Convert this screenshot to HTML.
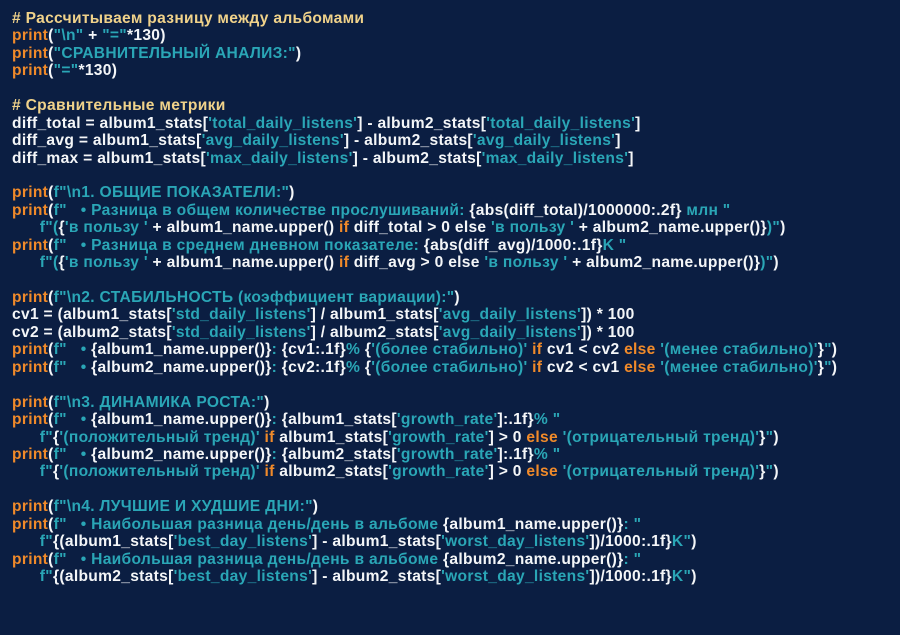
<!DOCTYPE html>
<html><head><meta charset="utf-8"><style>
html,body{margin:0;padding:0;}
body{width:900px;height:635px;background:#0b1e42;overflow:hidden;}
pre{margin:0;position:absolute;left:12px;top:10px;font-family:"Liberation Sans","DejaVu Sans",sans-serif;font-weight:bold;font-size:15.6px;letter-spacing:0.3px;line-height:17.44px;color:#f4f6f8;white-space:pre;}
.k{color:#f08a2a}.s{color:#2aa6b6}.c{color:#f0d28a}
</style></head><body>
<pre><span class="c"># Рассчитываем разницу между альбомами</span>
<span class="k">print</span>(<span class="s">"\n"</span> + <span class="s">"="</span>*130)
<span class="k">print</span>(<span class="s">"СРАВНИТЕЛЬНЫЙ АНАЛИЗ:"</span>)
<span class="k">print</span>(<span class="s">"="</span>*130)

<span class="c"># Сравнительные метрики</span>
diff_total = album1_stats[<span class="s">'total_daily_listens'</span>] - album2_stats[<span class="s">'total_daily_listens'</span>]
diff_avg = album1_stats[<span class="s">'avg_daily_listens'</span>] - album2_stats[<span class="s">'avg_daily_listens'</span>]
diff_max = album1_stats[<span class="s">'max_daily_listens'</span>] - album2_stats[<span class="s">'max_daily_listens'</span>]

<span class="k">print</span>(<span class="s">f"\n1. ОБЩИЕ ПОКАЗАТЕЛИ:"</span>)
<span class="k">print</span>(<span class="s">f"   • Разница в общем количестве прослушиваний: </span>{abs(diff_total)/1000000:.2f}<span class="s"> млн "</span>
      <span class="s">f"(</span>{<span class="s">'в пользу '</span> + album1_name.upper() <span class="k">if</span> diff_total &gt; 0 else <span class="s">'в пользу '</span> + album2_name.upper()}<span class="s">)"</span>)
<span class="k">print</span>(<span class="s">f"   • Разница в среднем дневном показателе: </span>{abs(diff_avg)/1000:.1f}<span class="s">K "</span>
      <span class="s">f"(</span>{<span class="s">'в пользу '</span> + album1_name.upper() <span class="k">if</span> diff_avg &gt; 0 else <span class="s">'в пользу '</span> + album2_name.upper()}<span class="s">)"</span>)

<span class="k">print</span>(<span class="s">f"\n2. СТАБИЛЬНОСТЬ (коэффициент вариации):"</span>)
cv1 = (album1_stats[<span class="s">'std_daily_listens'</span>] / album1_stats[<span class="s">'avg_daily_listens'</span>]) * 100
cv2 = (album2_stats[<span class="s">'std_daily_listens'</span>] / album2_stats[<span class="s">'avg_daily_listens'</span>]) * 100
<span class="k">print</span>(<span class="s">f"   • </span>{album1_name.upper()}<span class="s">: </span>{cv1:.1f}<span class="s">% </span>{<span class="s">'(более стабильно)'</span> <span class="k">if</span> cv1 &lt; cv2 <span class="k">else</span> <span class="s">'(менее стабильно)'</span>}<span class="s">"</span>)
<span class="k">print</span>(<span class="s">f"   • </span>{album2_name.upper()}<span class="s">: </span>{cv2:.1f}<span class="s">% </span>{<span class="s">'(более стабильно)'</span> <span class="k">if</span> cv2 &lt; cv1 <span class="k">else</span> <span class="s">'(менее стабильно)'</span>}<span class="s">"</span>)

<span class="k">print</span>(<span class="s">f"\n3. ДИНАМИКА РОСТА:"</span>)
<span class="k">print</span>(<span class="s">f"   • </span>{album1_name.upper()}<span class="s">: </span>{album1_stats[<span class="s">'growth_rate'</span>]:.1f}<span class="s">% "</span>
      <span class="s">f"</span>{<span class="s">'(положительный тренд)'</span> <span class="k">if</span> album1_stats[<span class="s">'growth_rate'</span>] &gt; 0 <span class="k">else</span> <span class="s">'(отрицательный тренд)'</span>}<span class="s">"</span>)
<span class="k">print</span>(<span class="s">f"   • </span>{album2_name.upper()}<span class="s">: </span>{album2_stats[<span class="s">'growth_rate'</span>]:.1f}<span class="s">% "</span>
      <span class="s">f"</span>{<span class="s">'(положительный тренд)'</span> <span class="k">if</span> album2_stats[<span class="s">'growth_rate'</span>] &gt; 0 <span class="k">else</span> <span class="s">'(отрицательный тренд)'</span>}<span class="s">"</span>)

<span class="k">print</span>(<span class="s">f"\n4. ЛУЧШИЕ И ХУДШИЕ ДНИ:"</span>)
<span class="k">print</span>(<span class="s">f"   • Наибольшая разница день/день в альбоме </span>{album1_name.upper()}<span class="s">: "</span>
      <span class="s">f"</span>{(album1_stats[<span class="s">'best_day_listens'</span>] - album1_stats[<span class="s">'worst_day_listens'</span>])/1000:.1f}<span class="s">K"</span>)
<span class="k">print</span>(<span class="s">f"   • Наибольшая разница день/день в альбоме </span>{album2_name.upper()}<span class="s">: "</span>
      <span class="s">f"</span>{(album2_stats[<span class="s">'best_day_listens'</span>] - album2_stats[<span class="s">'worst_day_listens'</span>])/1000:.1f}<span class="s">K"</span>)</pre>
</body></html>
